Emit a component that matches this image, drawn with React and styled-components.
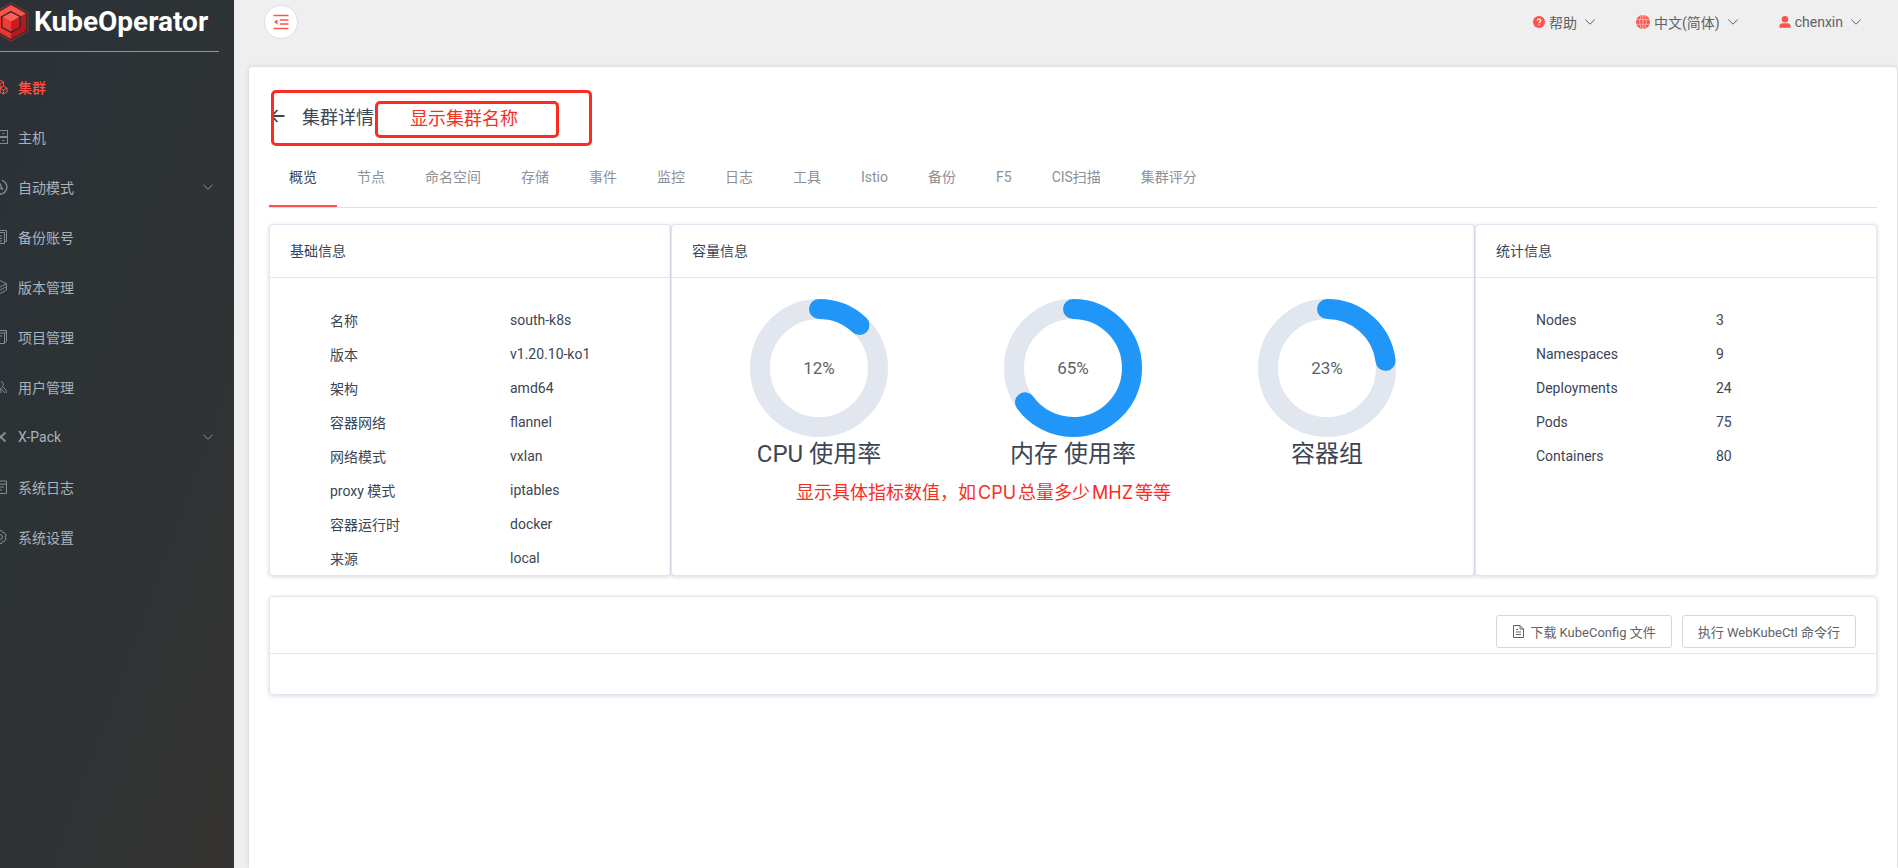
import React from 'react'
import styled, { createGlobalStyle, css } from 'styled-components'

const color = {
  brand: '#ff5147',
  mark: '#fb2c20',
  text: '#3c4554',
  regular: '#606266',
  muted: '#8d9096',
  line: '#e0e5f0',
  blue: '#2196f9',
}

const GlobalStyle = createGlobalStyle`
  * {
    box-sizing: border-box;
  }
  body {
    margin: 0;
    background: #efefef;
    color: ${color.text};
    font-family: Roboto, "Noto Sans CJK SC", sans-serif;
    font-size: 14px;
  }
  button {
    font-family: inherit;
    cursor: pointer;
  }
  a {
    color: inherit;
    text-decoration: none;
  }
`

const icons = {
  cluster: (
    <>
      <path d="M8 1l3.500 2v4L8 9 4.500 7V3zM4.500 7L8 9v4l-3.500 2L1 13V9zM11.500 7L15 9v4l-3.500 2L8 13V9z" />
      <path d="M4.500 3L8 5l3.500-2M8 5v4M1 9l3.500 2L8 9l3.500 2L15 9M4.500 11v4M11.500 11v4" />
    </>
  ),
  host: (
    <>
      <rect x="1" y="1.500" width="14.500" height="6" />
      <rect x="1" y="8.500" width="14.500" height="6" />
      <path d="M10.500 4.500h2M10.500 11.500h2M4 4.500h3M4 11.500h3" />
    </>
  ),
  auto: (
    <>
      <path d="M10 1.300A7 7 0 1 1 5 1.600" strokeWidth="1.400" />
      <path d="M5 11l3-6 3 6M6 9.500h4" strokeWidth="1.300" />
    </>
  ),
  backup: (
    <>
      <path d="M2 3.500h10.500v11H2zM4.500 3.500v-2h10v11h-2" />
      <path d="M4.500 7H10M4.500 9.500H10M4.500 12H10" />
    </>
  ),
  version: <path d="M8 1.500l6.500 3.200L8 8 1.500 4.700zM14.500 4.700v3L8 11 1.500 7.700M14.500 8v3L8 14.500 1.500 11" />,
  project: <path d="M2 4h10.500v10.500H2zM4 4V1.500h10.500v11l-2 1.500M4.500 7H10M12.500 4l2-2" />,
  users: (
    <>
      <circle cx="5" cy="5" r="2.800" />
      <path d="M1 14c0-4 1.500-6 4-6s4 2 4 6M9 2.500a2.800 2.800 0 0 1 1 5.200c2.500.8 4.500 3 4.500 6.300M8 8.500l5 5.500" />
    </>
  ),
  xpack: <path d="M4 3.500l9.500 9M13.500 3.500L4 12.500" strokeWidth="2" />,
  log: <path d="M2 2h12.500v12.500H2zM2 5.200h12.500M5 8h7M5 11h5" />,
  setting: (
    <>
      <path d="M6.500 1.500h3l.8 1.800 2 .2 1.700 2.500-.9 2 .9 2-1.700 2.500-2 .2-.8 1.800h-3l-.8-1.800-2-.2L2 10l.9-2L2 6l1.700-2.500 2-.2z" />
      <circle cx="8" cy="8" r="2.500" />
    </>
  ),
}

const menu = [
  { name: '集群', icon: 'cluster', active: true },
  { name: '主机', icon: 'host' },
  { name: '自动模式', icon: 'auto', children: true },
  { name: '备份账号', icon: 'backup' },
  { name: '版本管理', icon: 'version' },
  { name: '项目管理', icon: 'project' },
  { name: '用户管理', icon: 'users' },
  { name: 'X-Pack', icon: 'xpack', children: true },
  { name: '系统日志', icon: 'log' },
  { name: '系统设置', icon: 'setting' },
]

const tabs = ['概览', '节点', '命名空间', '存储', '事件', '监控', '日志', '工具', 'Istio', '备份', 'F5', 'CIS扫描', '集群评分']

const basicInfo = [
  ['名称', 'south-k8s'],
  ['版本', 'v1.20.10-ko1'],
  ['架构', 'amd64'],
  ['容器网络', 'flannel'],
  ['网络模式', 'vxlan'],
  ['proxy 模式', 'iptables'],
  ['容器运行时', 'docker'],
  ['来源', 'local'],
]

const statistics = [
  ['Nodes', 3],
  ['Namespaces', 9],
  ['Deployments', 24],
  ['Pods', 75],
  ['Containers', 80],
]

const gauges = [
  { name: 'CPU 使用率', value: 12 },
  { name: '内存 使用率', value: 65 },
  { name: '容器组', value: 23 },
]

const Chevron = () => (
  <svg width="10" height="10" viewBox="0 0 10 10" fill="none" stroke="currentColor" aria-hidden="true">
    <path d="M.300 2.600L5 7.200l4.700-4.600" />
  </svg>
)

const Logo = () => (
  <svg width="36" height="40" viewBox="0 0 36 40" aria-hidden="true">
    <path d="M18 1l17 9.500v19L18 39 1 29.500v-19z" fill="#3a2b2e" stroke="#8d3433" />
    <path d="M18 3l15 8.500-5 3L18 9 8 14.500l-5-3z" fill="#fb5347" />
    <path d="M33 11.500v17L18 37v-6l10-5.500v-11z" fill="#b9171c" />
    <path d="M3 11.500v17L18 37v-6L8 25.500v-11z" fill="#ee3431" />
    <path d="M18 9l10 5.500v11L18 31 8 25.500v-11z" fill="#39292d" />
    <path d="M18 10.500l8.500 4.500L18 20l-8.500-5z" fill="#ff6154" />
    <path d="M9.500 15l8.500 5v9.500L9.500 25z" fill="#f23a36" />
    <path d="M26.500 15L18 20v9.500l8.500-4.500z" fill="#cc1a20" />
  </svg>
)

const HelpIcon = () => (
  <svg width="12" height="12" viewBox="0 0 12 12" aria-hidden="true">
    <circle cx="6" cy="6" r="6" fill={color.brand} />
    <path d="M4.300 4.700a1.700 1.600 0 1 1 2.500 1.400c-.6.3-.8.500-.8 1.100M6 8.300v1.200" fill="none" stroke="#fff" strokeWidth="1.200" />
  </svg>
)

const GlobeIcon = () => (
  <svg width="14" height="14" viewBox="0 0 14 14" aria-hidden="true">
    <circle cx="7" cy="7" r="7" fill={color.brand} />
    <path d="M0 4.700h14M0 9.300h14M7 0v14" stroke="#f7b5af" fill="none" />
    <ellipse cx="7" cy="7" rx="3.300" ry="7" stroke="#f7b5af" fill="none" />
  </svg>
)

const UserIcon = () => (
  <svg width="12" height="12" viewBox="0 0 12 12" fill={color.brand} aria-hidden="true">
    <circle cx="6" cy="3.200" r="3.200" />
    <path d="M.500 11.800V10c0-2 1.500-2.700 3-2.700h5c1.500 0 3 .7 3 2.700v1.800z" />
  </svg>
)

const FoldIcon = () => (
  <svg width="16" height="16" viewBox="0 0 16 16" stroke={color.brand} strokeWidth="1.300" aria-hidden="true">
    <path d="M.500 1.500h15M7 6h8.500M7 10h8.500M.500 14.500h15" />
    <path d="M1 8l3.500-2.500v5z" fill={color.brand} stroke="none" />
  </svg>
)

const FileIcon = () => (
  <svg width="13" height="13" viewBox="0 0 13 13" fill="none" stroke="currentColor" aria-hidden="true">
    <path d="M1.500.500h6.500l3.500 3.500v8.500h-10zM8 .500V4h3.500M4 4.500h2M4 7h5M4 9.500h5" />
  </svg>
)

const Gauge = ({ name, value }) => {
  const length = 2 * Math.PI * 59
  return (
    <GaugeBox>
      <Ring>
        <svg width="138" height="138" viewBox="0 0 138 138" fill="none" strokeWidth="20" aria-hidden="true">
          <circle cx="69" cy="69" r="59" stroke="#e1e6ef" />
          <circle
            cx="69"
            cy="69"
            r="59"
            stroke={color.blue}
            strokeLinecap="round"
            strokeDasharray={`${(length * value) / 100} ${length}`}
            transform="rotate(-90 69 69)"
          />
        </svg>
        <span>{value}%</span>
      </Ring>
      <h3>{name}</h3>
    </GaugeBox>
  )
}

const InfoTable = ({ rows }) => (
  <Table>
    <tbody>
      {rows.map(([label, value]) => (
        <tr key={label}>
          <th scope="row">{label}</th>
          <td>{value}</td>
        </tr>
      ))}
    </tbody>
  </Table>
)

const App = () => {
  return (
    <Layout>
      <GlobalStyle />
      <Sidebar>
        <Brand>
          <Logo />
          <span>KubeOperator</span>
        </Brand>
        <nav>
          {menu.map((item) => (
            <MenuItem key={item.name} href="#" $active={item.active}>
              <svg width="16" height="16" viewBox="0 0 16 16" fill="none" stroke="currentColor" aria-hidden="true">
                {icons[item.icon]}
              </svg>
              <span>{item.name}</span>
              {item.children && <Chevron />}
            </MenuItem>
          ))}
        </nav>
      </Sidebar>
      <Main>
        <Topbar>
          <FoldButton aria-label="折叠菜单">
            <FoldIcon />
          </FoldButton>
          <TopMenu>
            <TopButton>
              <HelpIcon />
              <span>帮助</span>
              <Chevron />
            </TopButton>
            <TopButton>
              <GlobeIcon />
              <span>中文(简体)</span>
              <Chevron />
            </TopButton>
            <TopButton>
              <UserIcon />
              <span>chenxin</span>
              <Chevron />
            </TopButton>
          </TopMenu>
        </Topbar>
        <Page>
          <PageHeader>
            <BackButton aria-label="返回">
              <svg width="16" height="16" viewBox="0 0 16 16" fill="none" stroke="currentColor" strokeWidth="1.800">
                <path d="M15.500 8H3M8.500 2L2.800 8l5.700 6" />
              </svg>
            </BackButton>
            <h2>集群详情</h2>
            <OuterMark />
            <InnerMark>显示集群名称</InnerMark>
          </PageHeader>
          <Tabs>
            {tabs.map((tab, index) => (
              <Tab key={tab} href="#" $active={index === 0}>
                {tab}
              </Tab>
            ))}
          </Tabs>
          <Cards>
            <Card>
              <CardTitle>基础信息</CardTitle>
              <InfoTable rows={basicInfo} />
            </Card>
            <Card>
              <CardTitle>容量信息</CardTitle>
              <Gauges>
                {gauges.map((gauge) => (
                  <Gauge key={gauge.name} {...gauge} />
                ))}
                <Note>
                  显示具体指标数值，如<span>CPU</span>总量多少<span>MHZ</span>等等
                </Note>
              </Gauges>
            </Card>
            <Card>
              <CardTitle>统计信息</CardTitle>
              <InfoTable rows={statistics} />
            </Card>
          </Cards>
          <Card>
            <Actions>
              <Button>
                <FileIcon />
                下载 KubeConfig 文件
              </Button>
              <Button>执行 WebKubeCtl 命令行</Button>
            </Actions>
            <Empty />
          </Card>
        </Page>
      </Main>
    </Layout>
  )
}

const Layout = styled.div`
  display: flex;
  min-height: 100vh;
`

const Sidebar = styled.aside`
  flex: none;
  width: 234px;
  overflow: hidden;
  background: linear-gradient(110deg, #2b3136 0%, #2f3335 60%, #363432 100%);
  color: #a9b2bf;
`

const Brand = styled.div`
  display: flex;
  align-items: center;
  gap: 5px;
  height: 52px;
  margin: 0 15px 10px -7px;
  padding-bottom: 8px;
  border-bottom: 1px solid #92969a;
  color: #fff;
  font-size: 28px;
  font-weight: 700;
  line-height: 40px;
  svg {
    flex: none;
  }
`

const MenuItem = styled.a`
  display: flex;
  align-items: center;
  height: 50px;
  margin-left: -8px;
  padding-right: 21px;
  ${({ $active }) =>
    $active &&
    css`
      color: ${color.brand};
      font-weight: 500;
    `}
  span {
    flex: 1;
    margin-left: 10px;
  }
  svg {
    opacity: ${({ $active }) => ($active ? 1 : 0.7)};
  }
`

const Main = styled.main`
  display: flex;
  flex: 1;
  flex-direction: column;
  min-width: 0;
  padding: 0 1px 0 15px;
`

const Topbar = styled.header`
  display: flex;
  align-items: center;
  justify-content: space-between;
  height: 44px;
  margin-bottom: 23px;
  padding: 0 36px 0 15px;
`

const FoldButton = styled.button`
  display: flex;
  align-items: center;
  justify-content: center;
  width: 34px;
  height: 34px;
  padding: 0;
  border: 1px solid #dcdfe6;
  border-radius: 50%;
  background: #fff;
`

const TopMenu = styled.div`
  display: flex;
  gap: 41px;
`

const TopButton = styled.button`
  display: flex;
  align-items: center;
  padding: 0;
  border: 0;
  background: none;
  color: ${color.regular};
  font-size: 14px;
  span {
    margin: 0 8px 0 4px;
  }
`

const Page = styled.section`
  flex: 1;
  padding: 20px;
  border-radius: 4px 4px 0 0;
  background: #fff;
  box-shadow: 0 0 4px rgba(0, 0, 0, 0.15);
`

const PageHeader = styled.div`
  position: relative;
  display: flex;
  align-items: center;
  height: 60px;
  padding-bottom: 2px;
  h2 {
    margin: 0;
    font-size: 18px;
    font-weight: 400;
  }
`

const BackButton = styled.button`
  display: flex;
  margin-right: 17px;
  padding: 0;
  border: 0;
  background: none;
  color: ${color.text};
`

const OuterMark = styled.div`
  position: absolute;
  top: 3px;
  left: 2px;
  width: 321px;
  height: 56px;
  border: 3px solid ${color.mark};
  border-radius: 5px;
  pointer-events: none;
`

const InnerMark = styled.div`
  position: absolute;
  top: 14px;
  left: 106px;
  width: 184px;
  height: 37px;
  padding-left: 32px;
  border: 3px solid ${color.mark};
  border-radius: 5px;
  color: ${color.mark};
  font-size: 18px;
  line-height: 30px;
`

const Tabs = styled.nav`
  display: flex;
  margin-bottom: 16px;
  border-bottom: 1px solid #dfe0e4;
`

const Tab = styled.a`
  padding: 2px 20px 0;
  border-bottom: 2px solid ${({ $active }) => ($active ? color.brand : 'transparent')};
  color: ${({ $active }) => ($active ? color.text : color.muted)};
  line-height: 56px;
`

const Cards = styled.div`
  display: grid;
  grid-template-columns: 1fr 2fr 1fr;
  margin-bottom: 20px;
`

const Card = styled.section`
  border: 1px solid ${color.line};
  border-radius: 4px;
  background: #fff;
  box-shadow: 0 1px 4px rgba(60, 70, 100, 0.2);
`

const CardTitle = styled.h3`
  margin: 0;
  padding: 0 20px;
  border-bottom: 1px solid ${color.line};
  font-size: 14px;
  font-weight: 400;
  line-height: 52px;
`

const Table = styled.table`
  width: 100%;
  margin-top: 25px;
  border-spacing: 0;
  th,
  td {
    height: 34px;
    padding: 0;
    font-weight: 400;
    text-align: left;
  }
  th {
    width: 60%;
    padding-left: 60px;
  }
`

const Gauges = styled.div`
  position: relative;
  display: grid;
  grid-template-columns: repeat(3, 1fr);
  padding: 21px 20px 20px;
`

const GaugeBox = styled.div`
  text-align: center;
  h3 {
    margin: 0;
    font-size: 24px;
    font-weight: 400;
    line-height: 34px;
  }
`

const Ring = styled.div`
  display: grid;
  place-items: center;
  > * {
    grid-area: 1 / 1;
  }
  span {
    color: ${color.regular};
    font-size: 17px;
  }
`

const Note = styled.p`
  position: absolute;
  top: 202px;
  left: 124px;
  margin: 0;
  color: ${color.mark};
  font-family: Inter, "Noto Sans CJK SC", sans-serif;
  font-size: 18px;
  line-height: 26px;
  white-space: nowrap;
  span {
    margin: 0 2px;
  }
`

const Actions = styled.div`
  display: flex;
  justify-content: flex-end;
  gap: 10px;
  padding: 18px 20px 5px;
  border-bottom: 1px solid ${color.line};
`

const Button = styled.button`
  display: flex;
  align-items: center;
  gap: 5px;
  height: 33px;
  padding: 0 15px;
  border: 1px solid #d5d6e0;
  border-radius: 3px;
  background: #fff;
  color: ${color.regular};
  font-size: 13px;
`

const Empty = styled.div`
  height: 40px;
`

export default App
